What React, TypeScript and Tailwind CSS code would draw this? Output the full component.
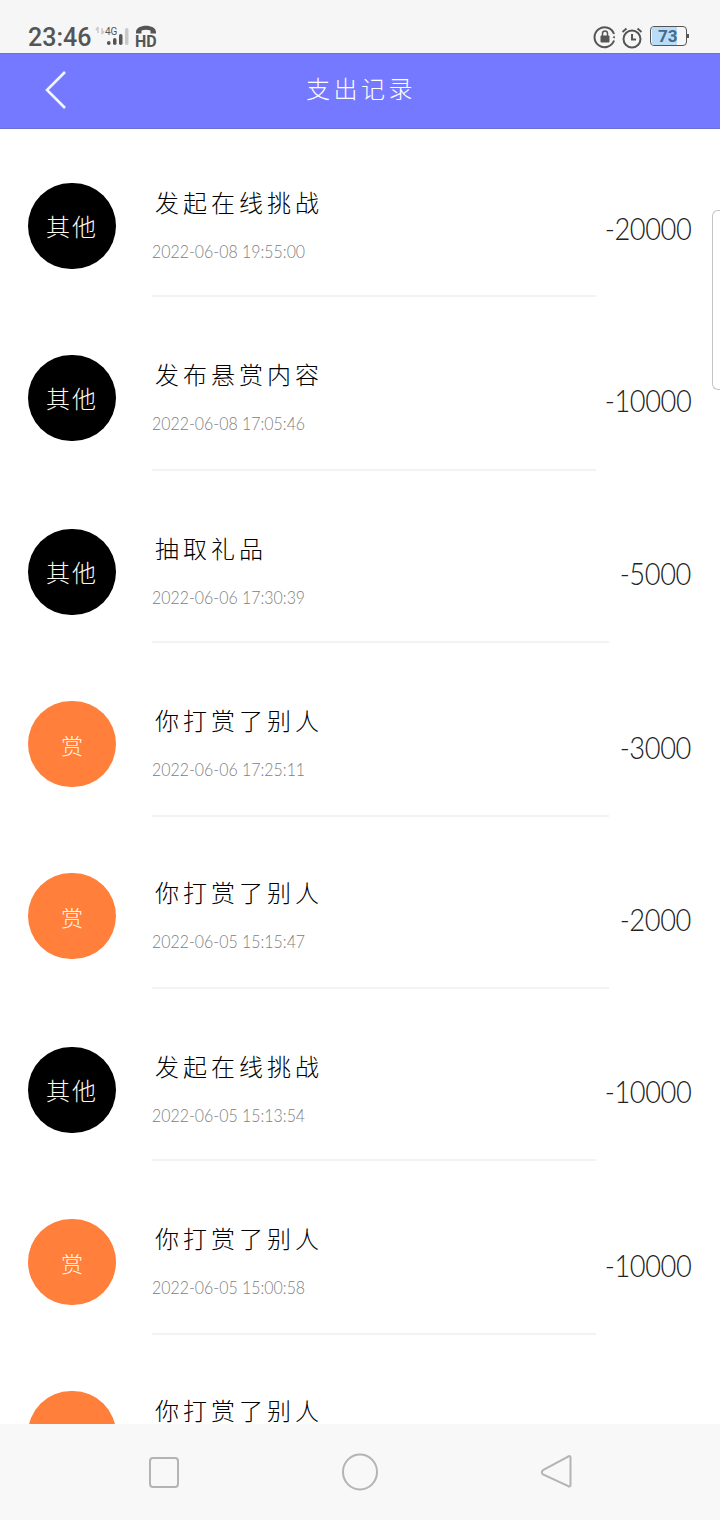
const cjk = "font-['Noto_Sans_CJK_SC','Noto_Sans',sans-serif]";

type Row = { title: string; date?: string; amount?: string; kind: "other" | "reward"; pt: string; h: string; amt: string };

const rows: Row[] = [
  { title: "发起在线挑战", date: "2022-06-08 19:55:00", amount: "-20000", kind: "other", pt: "pt-[54px]", h: "h-[114px]", amt: "mt-[26px] ml-[-3px]" },
  { title: "发布悬赏内容", date: "2022-06-08 17:05:46", amount: "-10000", kind: "other", pt: "pt-[58px]", h: "h-[116px]", amt: "mt-[26px] ml-[-3px]" },
  { title: "抽取礼品", date: "2022-06-06 17:30:39", amount: "-5000", kind: "other", pt: "pt-[58px]", h: "h-[114px]", amt: "mt-[25px] ml-[1px]" },
  { title: "你打赏了别人", date: "2022-06-06 17:25:11", amount: "-3000", kind: "reward", pt: "pt-[58px]", h: "h-[116px]", amt: "mt-[27px] ml-[1px]" },
  { title: "你打赏了别人", date: "2022-06-05 15:15:47", amount: "-2000", kind: "reward", pt: "pt-[56px]", h: "h-[116px]", amt: "mt-[27px] ml-[1px]" },
  { title: "发起在线挑战", date: "2022-06-05 15:13:54", amount: "-10000", kind: "other", pt: "pt-[58px]", h: "h-[114px]", amt: "mt-[25px] ml-[-3px]" },
  { title: "你打赏了别人", date: "2022-06-05 15:00:58", amount: "-10000", kind: "reward", pt: "pt-[58px]", h: "h-[116px]", amt: "mt-[27px] ml-[-3px]" },
  { title: "你打赏了别人", kind: "reward", pt: "pt-[56px]", h: "h-[116px]", amt: "mt-[27px]" },
];

function StatusBar() {
  return (
    <div className="h-[53px] shrink-0 bg-[#f6f6f6] flex items-start justify-between pl-[28px] pr-[31px] pt-[24px]">
      <div className="flex items-start">
        <span className="font-['Roboto',sans-serif] font-medium text-[25px] leading-[28px] text-[#555555]">23:46</span>
        <svg width="70" height="26" viewBox="0 0 70 26" className="ml-[4px]">
          <path d="M3 3v6M3 3l-2 3M7 10V4M7 10l2-3" stroke="#c8c8c8" strokeWidth="1.4" fill="none" />
          <text x="10" y="11" fontFamily="Roboto, sans-serif" fontSize="10" fill="#555">4G</text>
          <rect x="12" y="17" width="3.5" height="4" rx="1.7" fill="#555" />
          <rect x="18" y="14" width="3.5" height="7" rx="1.7" fill="#555" />
          <rect x="24" y="10" width="3.5" height="11" rx="1.7" fill="#555" />
          <rect x="30" y="4" width="3.5" height="17" rx="1.7" fill="#c9c9c9" />
          <path d="M41 8c0-8.500 20-8.500 20 0v1.500h-5.500V6.500c-2.500-1-6.500-1-9 0v3H41z" fill="#555" />
          <text x="40" y="23" fontFamily="Roboto, sans-serif" fontWeight="700" fontSize="16" fill="#555">HD</text>
        </svg>
      </div>
      <div className="flex items-start">
        <svg width="24" height="24" viewBox="0 0 24 24" className="mt-[1px]">
          <path d="M21 9a10 10 0 1 0 0 6.500" stroke="#555" strokeWidth="2" fill="none" />
          <path d="M19.500 12.500l2-2 .5 3z" fill="#555" />
          <rect x="7.500" y="10.500" width="9" height="7" rx="1" fill="#555" />
          <path d="M9.500 11V8.500a2.500 2.500 0 0 1 5 0V11" stroke="#555" strokeWidth="1.500" fill="none" />
        </svg>
        <svg width="22" height="24" viewBox="0 0 22 24" className="ml-[4px] mt-[2px]">
          <circle cx="11" cy="13" r="8.500" stroke="#555" strokeWidth="2" fill="none" />
          <path d="M11 8v5.500h4" stroke="#555" strokeWidth="2" fill="none" />
          <path d="M1.500 6l4-3.500M20.500 6l-4-3.500" stroke="#555" strokeWidth="1.800" fill="none" />
        </svg>
        <div className="ml-[7px] mt-[2px] flex items-center">
          <div className="relative w-[37px] h-[20px] rounded-[4px] border border-[#555555] overflow-hidden bg-[#f6f6f6]">
            <div className="h-full w-[25px] ml-[1px] bg-[#b9dcf8]" />
            <span className="absolute inset-0 pl-[7px] font-['Roboto',sans-serif] font-bold text-[17px] leading-[18px] text-[#44698a]">73</span>
          </div>
          <div className="w-[2px] h-[4px] bg-[#555555]" />
        </div>
      </div>
    </div>
  );
}

function Header() {
  return (
    <div className="h-[76px] shrink-0 bg-[#7579ff] border-t border-b border-[#6d6fd8] flex items-center justify-center relative">
      <svg width="24" height="40" viewBox="0 0 24 40" className="absolute left-[44px] top-[16px]" fill="none">
        <path d="M21 2L3 20l18 18" stroke="#f4f5ff" strokeWidth="2.600" />
      </svg>
      <span className={`${cjk} font-light text-[24px] leading-[30px] tracking-[3.5px] text-white mb-[6px] ml-[2px]`}>支出记录</span>
    </div>
  );
}

function ListRow({ row }: { row: Row }) {
  const other = row.kind === "other";
  return (
    <div className={`flex items-start pl-[28px] pr-[29px] ${row.pt}`}>
      <div
        className={`w-[88px] h-[86px] shrink-0 rounded-full flex items-center justify-center ${cjk} font-light leading-none text-[#fdf8ee] ${
          other ? "bg-black text-[24px] tracking-[2px]" : "bg-[#ff7f3b] text-[22px]"
        }`}
      >
        {other ? "其他" : "赏"}
      </div>
      <div className={`ml-[36px] flex-1 min-w-0 border-b-2 border-[#f3f3f3] ${row.h}`}>
        <div className={`${cjk} font-light text-[24px] leading-[26px] tracking-[4px] text-black mt-[6px] ml-[3px]`}>{row.title}</div>
        {row.date && (
          <div className="font-['Lato',sans-serif] font-light text-[18px] leading-[24px] text-[#808080] mt-[24px] whitespace-nowrap origin-left scale-x-[0.885]">{row.date}</div>
        )}
      </div>
      {row.amount && (
        <div className={`shrink-0 font-['Lato',sans-serif] font-light text-[31px] leading-[38px] tracking-[-0.5px] text-[#222222] origin-right scale-x-[0.88] ${row.amt}`}>
          {row.amount}
        </div>
      )}
    </div>
  );
}

function NavBar() {
  return (
    <div className="h-[96px] shrink-0 bg-[#f8f8f8] flex items-start relative z-10">
      <svg width="720" height="96" viewBox="0 0 720 96" fill="none" stroke="#b4b4b4" strokeWidth="2">
        <rect x="150" y="34" width="28" height="29" rx="3" />
        <ellipse cx="360" cy="48" rx="17" ry="17.500" />
        <path d="M568.500 32.500c.8-.8 2-.2 2 1v27.500c0 1.400-1.200 2-2.200 1.200L543 50.500c-1.500-1.300-1.500-3 0-4.300z" />
      </svg>
    </div>
  );
}

export default function App() {
  return (
    <div className="w-[720px] h-[1520px] bg-white flex flex-col overflow-hidden relative">
      <StatusBar />
      <Header />
      <div className="flex-1 min-h-0 overflow-hidden">
        {rows.map((row, i) => (
          <ListRow key={i} row={row} />
        ))}
      </div>
      <NavBar />
      <div className="absolute right-0 top-[210px] w-[8px] h-[180px] bg-white border border-r-0 border-[#c4c4c4] rounded-l-[6px]" />
    </div>
  );
}
